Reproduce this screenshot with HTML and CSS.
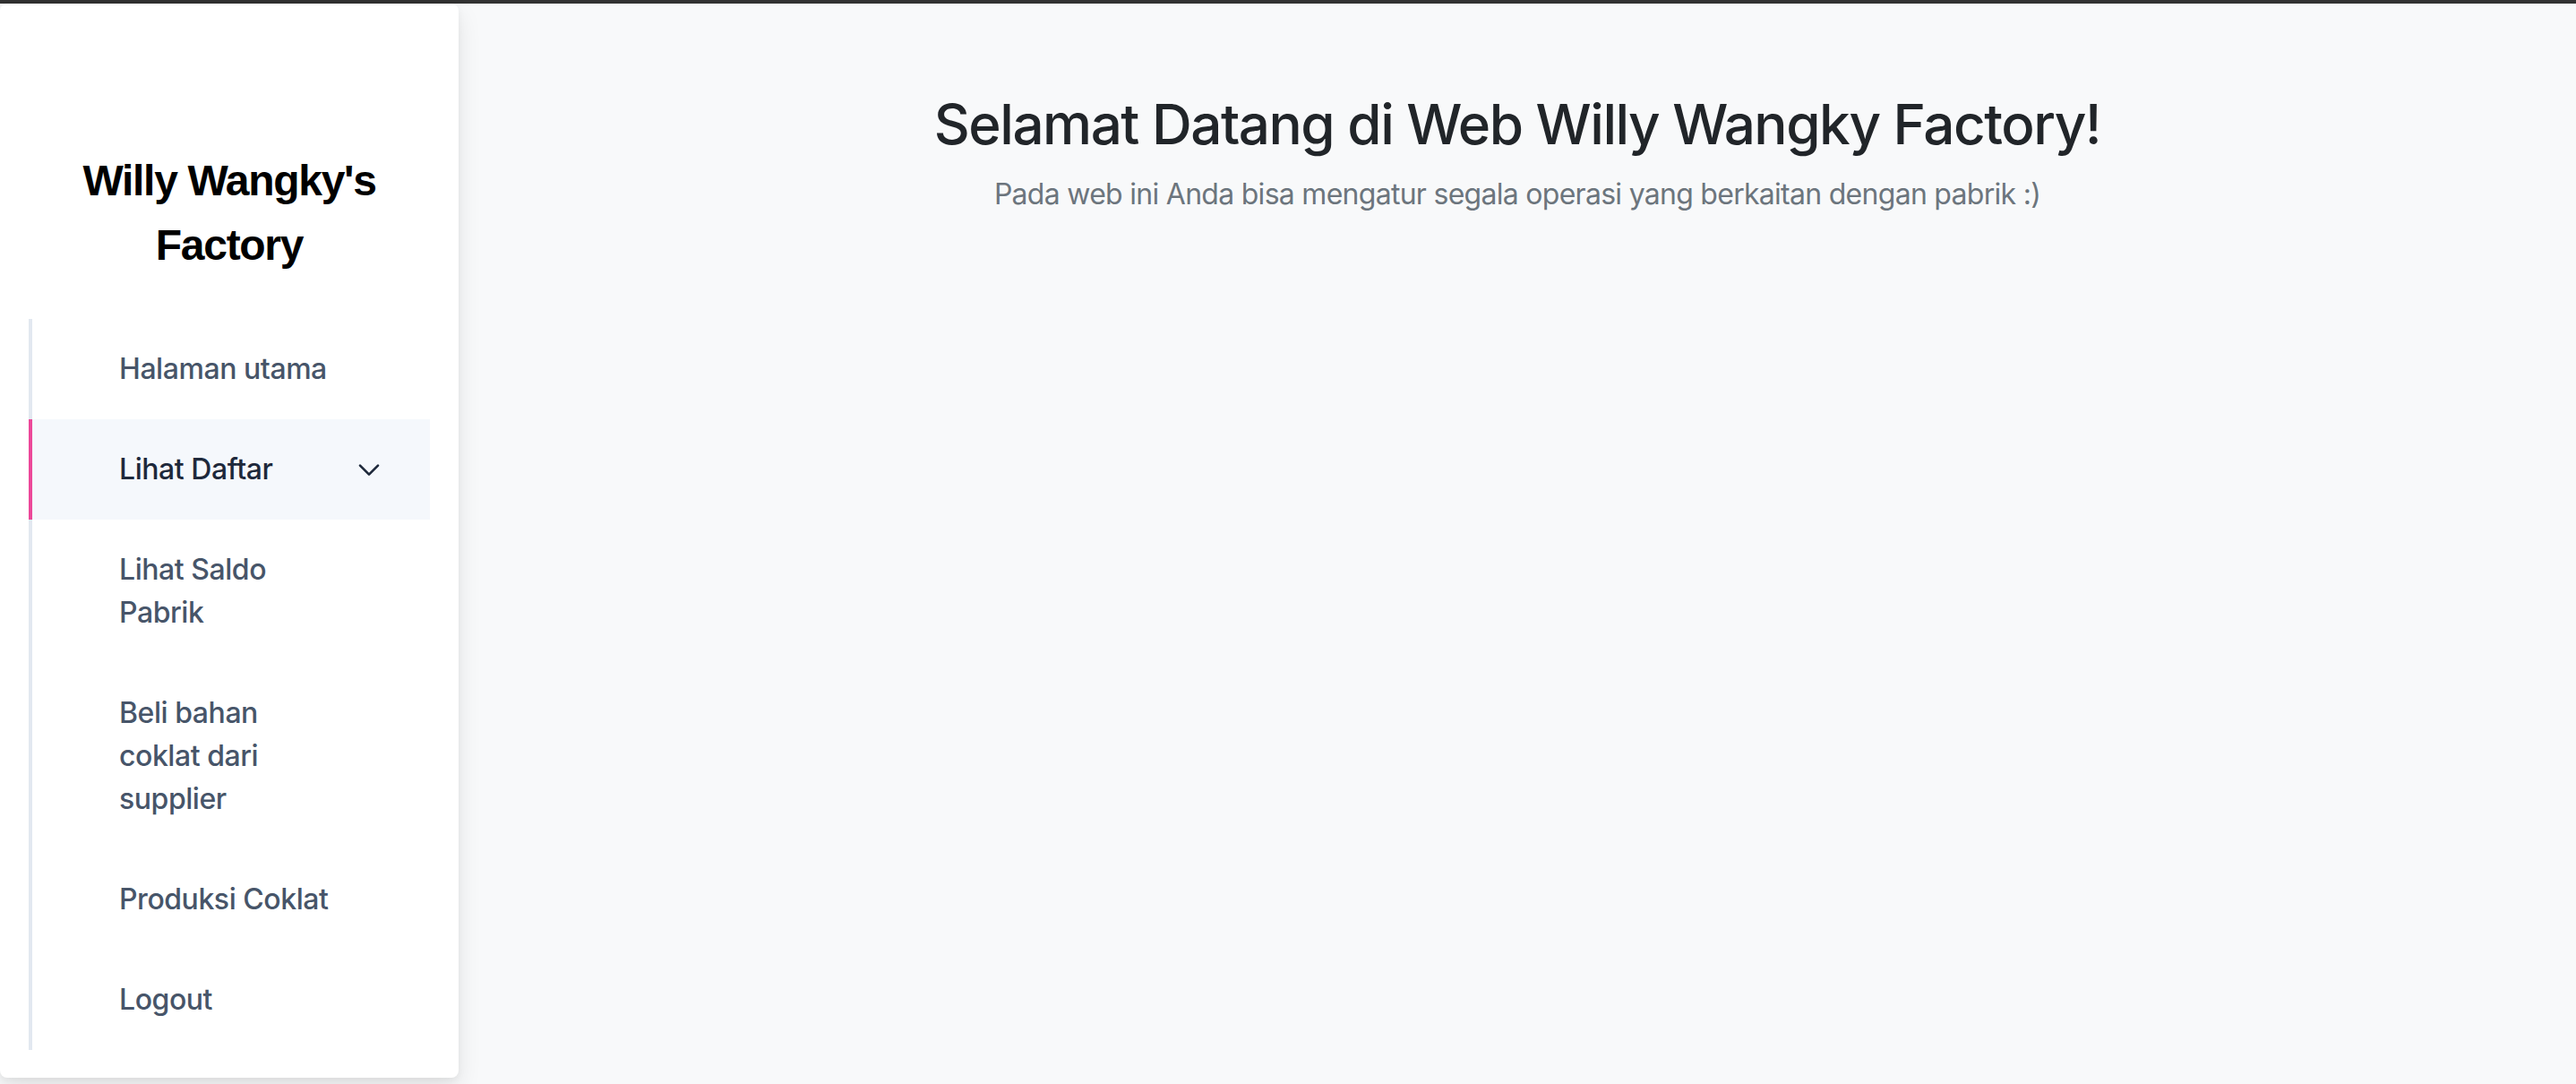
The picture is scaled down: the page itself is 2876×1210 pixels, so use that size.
FILE: index.html
```html
<!DOCTYPE html>
<html lang="id">
<head>
<meta charset="utf-8">
<title>Willy Wangky's Factory</title>
<link rel="stylesheet" href="styles.css">
</head>
<body>
<div class="topbar"></div>
<div class="layout">
  <aside class="sidebar">
    <h1 class="brand">Willy Wangky's Factory</h1>
    <nav class="nav">
      <a class="nav-item"><span class="label">Halaman utama</span></a>
      <a class="nav-item active"><span class="label">Lihat Daftar</span>
        <svg class="chev" viewBox="0 0 24 24" width="32" height="32" fill="none" stroke="currentColor" stroke-width="2" stroke-linecap="round" stroke-linejoin="round"><path d="M19.5 8.75l-7.5 7.5-7.5-7.5"/></svg>
      </a>
      <a class="nav-item"><span class="label">Lihat Saldo Pabrik</span></a>
      <a class="nav-item"><span class="label">Beli bahan coklat dari supplier</span></a>
      <a class="nav-item"><span class="label">Produksi Coklat</span></a>
      <a class="nav-item"><span class="label">Logout</span></a>
    </nav>
  </aside>
  <main class="main">
    <h2 class="title">Selamat Datang di Web Willy Wangky Factory!</h2>
    <p class="subtitle">Pada web ini Anda bisa mengatur segala operasi yang berkaitan dengan pabrik :)</p>
  </main>
</div>
</body>
</html>
```
FILE: styles.css
```css
* { box-sizing: border-box; }
html, body { margin: 0; padding: 0; }
body {
  background: #f8f9fa;
  font-family: Inter, "Noto Sans", sans-serif;
  color: #212529;
  height: 1210px;
  overflow: hidden;
}
.topbar {
  height: 4px;
  background: #323232;
}
.layout {
  display: flex;
  align-items: flex-start;
}
.sidebar {
  flex: 0 0 512px;
  width: 512px;
  background: #ffffff;
  border-radius: 8px;
  box-shadow: 0 12px 28px rgba(0, 0, 0, 0.09), 0 3px 8px rgba(0, 0, 0, 0.05);
  padding: 162px 0 31px 0;
}
.brand {
  margin: 0 0 46px 0;
  font-family: "Liberation Sans", Arial, sans-serif;
  font-weight: 700;
  font-size: 48px;
  line-height: 72px;
  letter-spacing: -1.3px;
  text-align: center;
  color: #000000;
  padding: 0 40px;
}
.nav {
  margin-left: 32px;
  width: 448px;
  border-left: 4px solid #e2e8f0;
  display: flex;
  flex-direction: column;
}
.nav-item {
  display: flex;
  align-items: center;
  margin-left: -4px;
  border-left: 4px solid transparent;
  padding: 32px 52px 32px 97px;
  font-size: 32px;
  line-height: 48px;
  font-weight: 500;
  letter-spacing: -0.45px;
  color: #475569;
  text-decoration: none;
}
.nav-item .label {
  flex: 0 0 242px;
  width: 242px;
}
.nav-item.active {
  border-left-color: #ec4899;
  background: #f5f8fc;
  color: #1e293b;
}
.chev {
  margin-left: auto;
  color: #1e293b;
  display: block;
}
.main {
  flex: 1;
  padding-top: 96px;
  text-align: center;
}
.title {
  margin: 0 0 16px 0;
  font-size: 62px;
  line-height: 77px;
  font-weight: 500;
  letter-spacing: -1.5px;
  color: #212529;
}
.subtitle {
  margin: 0;
  font-size: 32px;
  line-height: 48px;
  letter-spacing: -0.72px;
  color: #6c757d;
}
```
